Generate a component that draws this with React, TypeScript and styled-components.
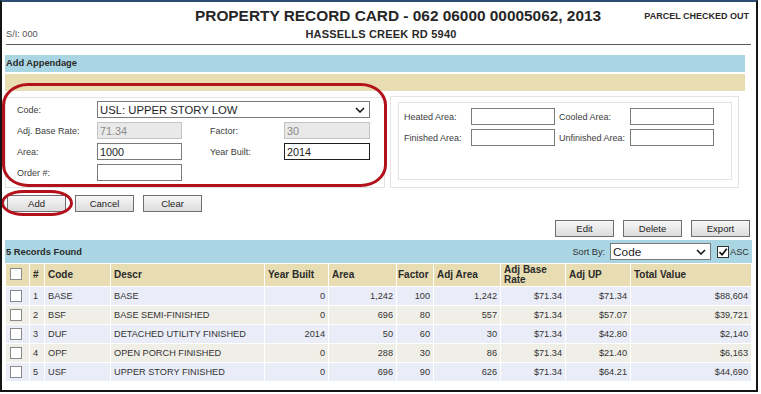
import styled, { createGlobalStyle } from 'styled-components'

const GlobalStyle = createGlobalStyle`
  html, body {
    margin: 0;
    padding: 0;
    background: #fff;
  }
  body {
    font-family: "Liberation Sans", Arial, sans-serif;
    color: #333;
  }
`

const Frame = styled.div`
  position: relative;
  box-sizing: border-box;
  width: 758px;
  height: 392px;
  border: 2px solid #151515;
  border-top-color: #2c4c72;
  overflow: hidden;
  background: #fff;
`

const TitleRow = styled.div`
  display: flex;
  align-items: center;
  height: 18px;
  margin-top: 5px;
  padding: 0 7px 0 193px;
`

const Title = styled.h1`
  margin: 0;
  font-size: 15.4px;
  font-weight: bold;
  color: #262626;
  white-space: nowrap;
`

const Status = styled.div`
  margin-left: auto;
  font-size: 9px;
  font-weight: bold;
  color: #2a2a2a;
`

const SubRow = styled.div`
  display: grid;
  grid-template-columns: 1fr auto 1fr;
  align-items: center;
  height: 12px;
  margin-top: 3px;
  padding-left: 4px;
`

const SiText = styled.span`
  font-size: 9.2px;
  color: #555;
`

const Address = styled.span`
  font-size: 11px;
  font-weight: bold;
  letter-spacing: 0.2px;
  color: #2a2a2a;
`

const Rule = styled.div`
  height: 1px;
  background: #5a5a5a;
  margin: 4px 5px 0 4px;
`

const SectionBar = styled.div<{ $tone: 'blue' | 'tan' }>`
  height: 17px;
  margin: ${(p) => (p.$tone === 'blue' ? '10px' : '2px')} 11px 0 3px;
  padding-left: 1px;
  background: ${(p) => (p.$tone === 'blue' ? '#aad6e3' : '#e7dcb2')};
  font-size: 9.3px;
  font-weight: bold;
  line-height: 17px;
  color: #2a2a2a;
`

const FormArea = styled.div`
  display: flex;
  align-items: flex-start;
  gap: 5px;
  margin: 5px 0 0 3px;
`

const LeftPanel = styled.div`
  box-sizing: border-box;
  width: 380px;
  height: 91px;
  margin-top: 1px;
  border: 1px solid #e2e2e2;
  padding: 3px 0 0 11px;
  display: grid;
  grid-template-columns: 80px 85px 102px 86px;
  grid-auto-rows: 17px;
  row-gap: 4px;
  align-items: center;
`

const RightPanel = styled.div`
  box-sizing: border-box;
  width: 349px;
  height: 92px;
  border: 1px solid #e4e4e4;
  padding: 5px 6px 0 7px;
`

const InnerBox = styled.div`
  box-sizing: border-box;
  height: 78px;
  border: 1px solid #e4e4e4;
  padding: 5px 0 0 5px;
  display: grid;
  grid-template-columns: 67px 84px 75px 84px;
  grid-auto-rows: 17px;
  row-gap: 4px;
  align-items: center;
`

const Label = styled.span<{ $indent?: number }>`
  font-size: 9px;
  color: #3c3c3c;
  padding-left: ${(p) => p.$indent ?? 0}px;
  white-space: nowrap;
`

const Field = styled.input<{ $focus?: boolean }>`
  box-sizing: border-box;
  width: 100%;
  height: 17px;
  margin: 0;
  padding: 0 2px;
  border: 1px solid ${(p) => (p.$focus ? '#1e1e1e' : '#7a7a7a')};
  background: #fff;
  font-family: "Liberation Sans", Arial, sans-serif;
  font-size: 10.8px;
  color: #222;
  outline: none;

  &:disabled {
    background: #e9e9e9;
    border-color: #c4c4c4;
    color: #8a8a8a;
  }
`

const FakeSelect = styled.div<{ $span?: boolean; $width?: number }>`
  box-sizing: border-box;
  grid-column: ${(p) => (p.$span ? '2 / 5' : 'auto')};
  width: ${(p) => (p.$width ? `${p.$width}px` : 'auto')};
  height: 17px;
  border: 1px solid #7a7a7a;
  background: #fff;
  display: flex;
  align-items: center;
  padding: 0 4px 0 2px;
  font-size: ${(p) => (p.$span ? '11.3px' : '11.8px')};
  color: #1e1e1e;

  svg {
    margin-left: auto;
  }
`

const ButtonRow = styled.div<{ $end?: boolean }>`
  display: flex;
  gap: 9px;
  justify-content: ${(p) => (p.$end ? 'flex-end' : 'flex-start')};
  margin: ${(p) => (p.$end ? '8px 6px 0 0' : '7px 0 0 5px')};
`

const Button = styled.button`
  box-sizing: border-box;
  width: 59px;
  height: 17px;
  padding: 0;
  border: 1px solid #6f6f6f;
  border-radius: 0;
  background: linear-gradient(#f7f7f7, #dcdcdc);
  font-family: "Liberation Sans", Arial, sans-serif;
  font-size: 9.5px;
  color: #222;
`

const RecordsBar = styled.div`
  display: flex;
  align-items: center;
  height: 23px;
  margin: 3px 4px 0 3px;
  padding: 0 3px 0 1px;
  background: #aad6e3;
`

const RecordsTitle = styled.span`
  font-size: 9.3px;
  font-weight: bold;
  color: #2a2a2a;
`

const SortGroup = styled.div`
  display: flex;
  align-items: center;
  margin-left: auto;
  font-size: 9.2px;
  color: #333;
`

const SortLabel = styled.span`
  margin-right: 5px;
`

const Check = styled.span<{ $dark?: boolean }>`
  box-sizing: border-box;
  display: inline-flex;
  align-items: center;
  justify-content: center;
  width: 12px;
  height: 12px;
  border: 1px solid ${(p) => (p.$dark ? '#333' : '#8a8a8a')};
  background: #fff;
`

const AscCheck = styled(Check)`
  margin: 0 1px 0 6px;
`

const Table = styled.table`
  width: 746px;
  margin: 0 4px 0 3px;
  border-collapse: collapse;
  table-layout: fixed;

  th,
  td {
    border: 1px solid #fff;
    padding: 0 3px;
    white-space: nowrap;
    overflow: hidden;
  }

  th {
    height: 22px;
    background: #e7dcb2;
    font-size: 10px;
    font-weight: bold;
    line-height: 10px;
    text-align: left;
    color: #2a2a2a;
    white-space: normal;
  }

  td {
    height: 18px;
    font-size: 9.2px;
    color: #333;
  }
`

const Row = styled.tr<{ $alt: boolean }>`
  background: ${(p) => (p.$alt ? '#f0efe7' : '#eaedf8')};
`

const Num = styled.td`
  text-align: right;
`

const TightHead = styled.th`
  && {
    padding: 0 1px;
  }
`

const BoxCell = styled.td`
  && {
    padding: 0 0 0 4px;
  }
  line-height: 0;
`

const BoxHead = styled.th`
  && {
    padding: 0 0 0 4px;
  }
`

const Annotation = styled.div<{ $x: number; $y: number; $w: number; $h: number; $r: string }>`
  position: absolute;
  left: ${(p) => p.$x}px;
  top: ${(p) => p.$y}px;
  width: ${(p) => p.$w}px;
  height: ${(p) => p.$h}px;
  box-sizing: border-box;
  border: 3px solid #b3121c;
  border-radius: ${(p) => p.$r};
  pointer-events: none;
`

const Chevron = () => (
  <svg width="10" height="6" viewBox="0 0 10 6">
    <polyline points="1,1 5,5 9,1" fill="none" stroke="#1a1a1a" strokeWidth="1.6" />
  </svg>
)

const Tick = () => (
  <svg width="10" height="10" viewBox="0 0 10 10">
    <polyline points="1.5,5 4,7.8 8.8,1.8" fill="none" stroke="#111" strokeWidth="1.7" />
  </svg>
)

const records = [
  { n: 1, code: 'BASE', descr: 'BASE', year: '0', area: '1,242', factor: '100', adjArea: '1,242', rate: '$71.34', up: '$71.34', total: '$88,604' },
  { n: 2, code: 'BSF', descr: 'BASE SEMI-FINISHED', year: '0', area: '696', factor: '80', adjArea: '557', rate: '$71.34', up: '$57.07', total: '$39,721' },
  { n: 3, code: 'DUF', descr: 'DETACHED UTILITY FINISHED', year: '2014', area: '50', factor: '60', adjArea: '30', rate: '$71.34', up: '$42.80', total: '$2,140' },
  { n: 4, code: 'OPF', descr: 'OPEN PORCH FINISHED', year: '0', area: '288', factor: '30', adjArea: '86', rate: '$71.34', up: '$21.40', total: '$6,163' },
  { n: 5, code: 'USF', descr: 'UPPER STORY FINISHED', year: '0', area: '696', factor: '90', adjArea: '626', rate: '$71.34', up: '$64.21', total: '$44,690' },
]

const widths = [24, 15, 66, 154, 64, 68, 37, 67, 65, 65, 121]

export default function App() {
  return (
    <>
      <GlobalStyle />
      <Frame>
        <TitleRow>
          <Title>PROPERTY RECORD CARD - 062 06000 00005062, 2013</Title>
          <Status>PARCEL CHECKED OUT</Status>
        </TitleRow>
        <SubRow>
          <SiText>S/I: 000</SiText>
          <Address>HASSELLS CREEK RD 5940</Address>
          <span />
        </SubRow>
        <Rule />

        <SectionBar $tone="blue">Add Appendage</SectionBar>
        <SectionBar $tone="tan" />

        <FormArea>
          <LeftPanel>
            <Label>Code:</Label>
            <FakeSelect $span>
              USL: UPPER STORY LOW
              <Chevron />
            </FakeSelect>

            <Label>Adj. Base Rate:</Label>
            <Field disabled defaultValue="71.34" />
            <Label $indent={28}>Factor:</Label>
            <Field disabled defaultValue="30" />

            <Label>Area:</Label>
            <Field defaultValue="1000" />
            <Label $indent={28}>Year Built:</Label>
            <Field $focus defaultValue="2014" />

            <Label>Order #:</Label>
            <Field />
          </LeftPanel>

          <RightPanel>
            <InnerBox>
              <Label>Heated Area:</Label>
              <Field />
              <Label $indent={4}>Cooled Area:</Label>
              <Field />
              <Label>Finished Area:</Label>
              <Field />
              <Label $indent={4}>Unfinished Area:</Label>
              <Field />
            </InnerBox>
          </RightPanel>
        </FormArea>

        <ButtonRow>
          <Button>Add</Button>
          <Button>Cancel</Button>
          <Button>Clear</Button>
        </ButtonRow>

        <ButtonRow $end>
          <Button>Edit</Button>
          <Button>Delete</Button>
          <Button>Export</Button>
        </ButtonRow>

        <RecordsBar>
          <RecordsTitle>5 Records Found</RecordsTitle>
          <SortGroup>
            <SortLabel>Sort By:</SortLabel>
            <FakeSelect $width={101}>
              Code
              <Chevron />
            </FakeSelect>
            <AscCheck $dark>
              <Tick />
            </AscCheck>
            ASC
          </SortGroup>
        </RecordsBar>

        <Table>
          <colgroup>
            {widths.map((w, i) => (
              <col key={i} style={{ width: w }} />
            ))}
          </colgroup>
          <thead>
            <tr>
              <BoxHead>
                <Check />
              </BoxHead>
              <th>#</th>
              <th>Code</th>
              <th>Descr</th>
              <th>Year Built</th>
              <th>Area</th>
              <TightHead>Factor</TightHead>
              <th>Adj Area</th>
              <th>Adj Base Rate</th>
              <th>Adj UP</th>
              <th>Total Value</th>
            </tr>
          </thead>
          <tbody>
            {records.map((r, i) => (
              <Row key={r.n} $alt={i % 2 === 1}>
                <BoxCell>
                  <Check />
                </BoxCell>
                <td>{r.n}</td>
                <td>{r.code}</td>
                <td>{r.descr}</td>
                <Num>{r.year}</Num>
                <Num>{r.area}</Num>
                <Num>{r.factor}</Num>
                <Num>{r.adjArea}</Num>
                <Num>{r.rate}</Num>
                <Num>{r.up}</Num>
                <Num>{r.total}</Num>
              </Row>
            ))}
          </tbody>
        </Table>

        <Annotation $x={0} $y={81} $w={385} $h={104} $r="26px / 22px" />
        <Annotation $x={-1} $y={188} $w={72} $h={26} $r="22px / 13px" />
      </Frame>
    </>
  )
}
